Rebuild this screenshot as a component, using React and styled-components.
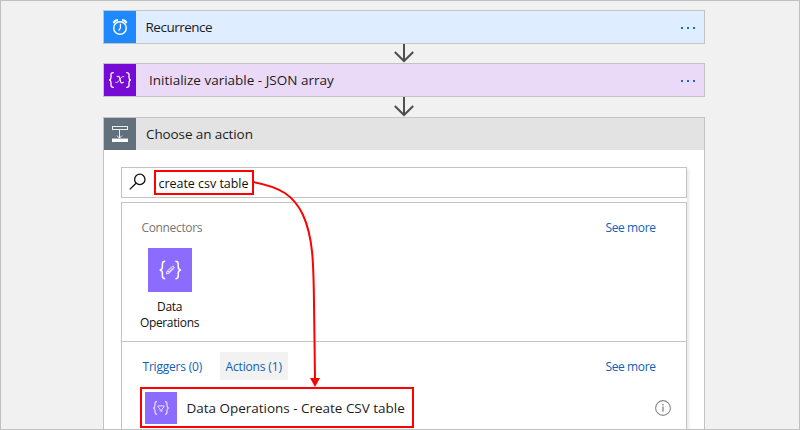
import React from "react";
import styled, { createGlobalStyle } from "styled-components";

const GlobalStyle = createGlobalStyle`
  * { box-sizing: border-box; }
  body { margin: 0; overflow: hidden; }
`;

const Canvas = styled.main`
  position: relative;
  display: flex;
  flex-direction: column;
  align-items: center;
  width: 800px;
  height: 430px;
  padding: 9px 0 0 7px;
  overflow: hidden;
  border: 1px solid #c1c1c1;
  background: #f1f1f1;
  color: #1c1c1c;
  font-family: "Open Sans", "Noto Sans", sans-serif;
`;

const StepCard = styled.section`
  display: flex;
  flex: none;
  width: 602px;
  height: 34px;
  border: 1px solid #c4c4c4;
  background: ${(p) => p.$tint};
`;

const StepIcon = styled.div`
  display: flex;
  flex: none;
  width: 32px;
  height: 32px;
  background: ${(p) => p.$color};
  svg { display: block; }
`;

const StepTitle = styled.h2`
  flex: 1;
  margin: 0 0 0 ${(p) => p.$gap ?? 10}px;
  font-size: 13.5px;
  font-weight: 400;
  line-height: 33px;
  letter-spacing: ${(p) => p.$track ?? 0}px;
  white-space: nowrap;
`;

const MoreButton = styled.button`
  display: flex;
  align-items: center;
  gap: 4px;
  margin: 1px 9px 0 0;
  padding: 0;
  border: 0;
  background: none;
`;

const Dot = styled.i`
  width: 2px;
  height: 2px;
  background: #1d6bc0;
`;

const Connector = styled.svg`
  display: block;
  flex: none;
  margin-left: 1px;
`;

const ActionCard = styled.section`
  flex: none;
  width: 602px;
  height: 330px;
  border: 1px solid #c4c4c4;
  background: #fff;
`;

const ActionHeader = styled.header`
  display: flex;
  height: 32px;
  background: #e3e3e3;
`;

const Picker = styled.div`
  width: 566px;
  margin: 17px 0 0 17px;
  box-shadow: 2px 2px 3px rgba(0, 0, 0, 0.09);
`;

const SearchBox = styled.div`
  display: flex;
  align-items: flex-start;
  height: 31px;
  padding: 2px 0 0 7px;
  border: 1px solid #c4c4c4;
  background: #fff;
`;

const Query = styled.div`
  width: 100px;
  height: 25px;
  margin-left: 7px;
  padding-left: 3px;
  border: 2px solid #f00;
  color: #111;
  font-size: 12.5px;
  line-height: 23px;
  letter-spacing: -0.03px;
  white-space: nowrap;
`;

const Results = styled.div`
  height: 240px;
  border: 1px solid #c4c4c4;
  background: #fff;
`;

const Gap = styled.div`
  height: 4px;
  background: #fff;
`;

const ConnectorSection = styled.section`
  height: 139px;
  padding: 15px 30px 0 20px;
  border-bottom: 1px solid #c4c4c4;
`;

const SectionBar = styled.div`
  display: flex;
  justify-content: space-between;
  font-size: 12px;
  line-height: 20px;
`;

const Muted = styled.span`
  color: #767676;
  letter-spacing: -0.35px;
`;

const Link = styled.a`
  color: #1160b7;
  font-size: 12px;
  letter-spacing: -0.4px;
`;

const ConnectorTile = styled.div`
  display: flex;
  flex-direction: column;
  align-items: center;
  width: 60px;
  margin: 10px 0 0 -2px;
  color: #111;
  font-size: 12px;
  line-height: 16px;
  letter-spacing: -0.35px;
  text-align: center;
`;

const TileIcon = styled.div`
  width: 44px;
  height: 44px;
  margin-bottom: 7px;
  background: #8c6cff;
  svg { display: block; }
`;

const ActionSection = styled.section`
  padding: 10px 30px 0 21px;
`;

const Tabs = styled.div`
  display: flex;
  align-items: center;
  height: 28px;
`;

const Tab = styled.a`
  width: ${(p) => p.$width}px;
  height: 28px;
  padding-left: ${(p) => p.$inset ?? 0}px;
  background: ${(p) => (p.$selected ? "#f2f2f2" : "none")};
  color: #1160b7;
  font-size: 12px;
  line-height: 29px;
  letter-spacing: ${(p) => p.$track ?? 0}px;
`;

const TabSpacer = styled.div`
  flex: 1;
`;

const ResultRow = styled.div`
  display: flex;
  align-items: center;
  justify-content: space-between;
  width: 532px;
  margin: 7px 0 0 -3px;
`;

const ResultItem = styled.div`
  display: flex;
  width: 274px;
  height: 41px;
  padding: 3px;
  border: 2px solid #f00;
`;

const Flow = styled.svg`
  position: absolute;
  left: 249px;
  top: 175px;
`;

const Clock = () => (
  <svg width="32" height="32" viewBox="0 0 32 32" fill="none" stroke="#fff">
    <circle cx="16" cy="17" r="6.3" strokeWidth="1.4" />
    <path d="M16.4 12.8v4.3l-1.8 2.6" strokeWidth="1.2" />
    <path d="M9.6 12.2C10.1 10.1 11.9 9 14 9.3M22.4 12.2C21.9 10.1 20.1 9 18 9.3" strokeWidth="1.9" />
  </svg>
);

const Variable = () => (
  <svg width="32" height="32" viewBox="0 0 32 32" fill="none" stroke="#fff" strokeLinecap="round">
    <path d="M9.3 8.7C7.4 8.7 7 9.4 7 10.8v2.6c0 1.6-.5 2.4-1.8 2.6 1.3.2 1.8 1 1.8 2.6v2.7c0 1.4.4 2.1 2.3 2.1M22.7 8.7c1.9 0 2.3.7 2.3 2.1v2.6c0 1.6.5 2.4 1.8 2.6-1.3.2-1.8 1-1.8 2.6v2.7c0 1.4-.4 2.1-2.3 2.1" strokeWidth="1.3" />
    <path d="M13.2 12.6c1.5-.8 2.1 0 2.5 1.5l.8 3.3c.4 1.6 1.2 2 2.8.9" strokeWidth="1.15" />
    <path d="M19.8 12.6c-1.6-.6-2.9.9-3.9 2.8-1.1 2-2.3 3.6-4.2 3" strokeWidth=".8" />
  </svg>
);

const InsertStep = () => (
  <svg width="32" height="32" viewBox="0 0 32 32" fill="none" stroke="#e8ebee">
    <rect x="8.5" y="8.5" width="15" height="3" />
    <path d="M15.5 12v8M13 17.6l2.5 2.6 2.5-2.6" />
    <path d="M8 20.5h16" stroke="#a5adb5" />
    <path d="M8 22.5h16" stroke="#fff" strokeWidth="3" />
  </svg>
);

const bracesPath =
  "M17.2 13.3c-2.2 0-2.8.8-2.8 2.6v3c0 1.8-.8 2.7-2.6 3.1 1.8.4 2.6 1.3 2.6 3.1v3c0 1.8.6 2.6 2.8 2.6M27.4 13.3c2.2 0 2.8.8 2.8 2.6v3c0 1.8.8 2.7 2.6 3.1-1.8.4-2.6 1.3-2.6 3.1v3c0 1.8-.6 2.6-2.8 2.6";

const DataOperations = () => (
  <svg width="44" height="44" viewBox="0 0 44 44" fill="none" stroke="#fff">
    <path d={bracesPath} strokeWidth="1.5" />
    <path d="M18.4 25.8l.8-2.8 5.2-4.6c.8-.6 2.4.9 1.7 1.8l-4.9 4.8zM19.8 23l1.7 1.8M20.7 24l4.4-4.4" strokeWidth=".9" />
  </svg>
);

const CsvTable = () => (
  <svg width="32" height="32" viewBox="0 0 32 32" fill="none" stroke="#f0ebff">
    <path d="M12 9.6c-1.6 0-2 .6-2 1.8v2.3c0 1.3-.5 2-1.7 2.3 1.2.3 1.7 1 1.7 2.3v2.3c0 1.2.4 1.8 2 1.8M20 9.6c1.6 0 2 .6 2 1.8v2.3c0 1.3.5 2 1.7 2.3-1.2.3-1.7 1-1.7 2.3v2.3c0 1.2-.4 1.8-2 1.8" strokeWidth="1.1" />
    <path d="M12.9 13.9h6.2v1l-2.2 2.2v2.4l-1.8-.9v-1.5l-2.2-2.2z" strokeWidth=".9" />
  </svg>
);

const Search = () => (
  <svg width="18" height="24" viewBox="0 0 18 24" fill="none" stroke="#111" strokeWidth="1.3">
    <circle cx="10.8" cy="9.4" r="5.2" />
    <path d="M7 13.2L.8 19.4" />
  </svg>
);

const Info = () => (
  <svg width="18" height="18" viewBox="0 0 18 18" fill="none" stroke="#8a8a8a">
    <circle cx="9" cy="9" r="7.4" strokeWidth="1.1" />
    <path d="M9 7.6v5M9 5v1.4" strokeWidth="1.4" />
  </svg>
);

const DownArrow = ({ height }) => (
  <Connector width="22" height={height} viewBox={`0 0 22 ${height}`} fill="none" stroke="#4f4f4f" strokeWidth="2">
    <path d={`M11 0V${height - 2}M1.8 ${height - 11}L11 ${height - 2}L20.2 ${height - 11}`} />
  </Connector>
);

const More = () => (
  <MoreButton aria-label="More options">
    <Dot /><Dot /><Dot />
  </MoreButton>
);

export default function App() {
  return (
    <Canvas>
      <GlobalStyle />
      <StepCard $tint="#deedff">
        <StepIcon $color="#1e88ff"><Clock /></StepIcon>
        <StepTitle $track={-0.5}>Recurrence</StepTitle>
        <More />
      </StepCard>
      <DownArrow height={19} />
      <StepCard $tint="#ebdaf7">
        <StepIcon $color="#770bd6"><Variable /></StepIcon>
        <StepTitle $gap={13.5}>Initialize variable - JSON array</StepTitle>
        <More />
      </StepCard>
      <DownArrow height={20} />
      <ActionCard>
        <ActionHeader>
          <StepIcon $color="#62707e"><InsertStep /></StepIcon>
          <StepTitle $gap={10.5} $track={-0.1}>Choose an action</StepTitle>
        </ActionHeader>
        <Picker>
          <SearchBox>
            <Search />
            <Query>create csv table</Query>
          </SearchBox>
          <Gap />
          <Results>
            <ConnectorSection>
              <SectionBar>
                <Muted>Connectors</Muted>
                <Link>See more</Link>
              </SectionBar>
              <ConnectorTile>
                <TileIcon><DataOperations /></TileIcon>
                <span>Data</span>
                <span>Operations</span>
              </ConnectorTile>
            </ConnectorSection>
            <ActionSection>
              <Tabs>
                <Tab $width={77} $track={-0.2}>Triggers (0)</Tab>
                <Tab $width={68} $inset={6} $track={-0.15} $selected>Actions (1)</Tab>
                <TabSpacer />
                <Link>See more</Link>
              </Tabs>
              <ResultRow>
                <ResultItem>
                  <StepIcon $color="#8c6cff"><CsvTable /></StepIcon>
                  <StepTitle $track={-0.02}>Data Operations - Create CSV table</StepTitle>
                </ResultItem>
                <Info />
              </ResultRow>
            </ActionSection>
          </Results>
        </Picker>
      </ActionCard>
      <Flow width="80" height="212" viewBox="0 0 80 212" fill="none">
        <path d="M3 6C31 11 44 20 53 39C63 61 63.5 86 64 127L65 203" stroke="#f00" strokeWidth="2" />
        <path d="M60 202H70L65 211Z" fill="#f00" />
      </Flow>
    </Canvas>
  );
}
